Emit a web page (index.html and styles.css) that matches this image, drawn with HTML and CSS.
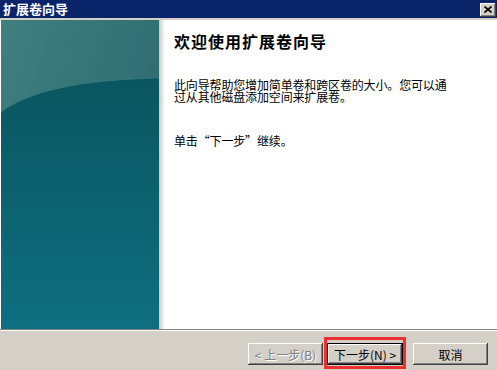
FILE: index.html
```html
<!DOCTYPE html>
<html lang="zh-CN">
<head>
  <meta charset="UTF-8">
  <title>扩展卷向导</title>
  <link rel="stylesheet" href="styles.css">
</head>
<body>
  <div class="wizard">
    <div class="titlebar">
      <span class="title">扩展卷向导</span>
      <span class="closebtn" title="关闭">
        <svg width="8" height="7" viewBox="0 0 8 7"><path d="M0.5 0.5 L7.5 6.5 M7.5 0.5 L0.5 6.5" stroke="#000" stroke-width="1.7"/></svg>
      </span>
    </div>
    <div class="page">
      <div class="banner">
        <svg width="158" height="309" viewBox="0 0 158 309">
          <defs>
            <linearGradient id="upper" x1="0" y1="0" x2="1" y2="0.6">
              <stop offset="0" stop-color="#3f7f7e"/>
              <stop offset="1" stop-color="#2c6a70"/>
            </linearGradient>
            <linearGradient id="lower" x1="0" y1="0" x2="0" y2="1">
              <stop offset="0" stop-color="#0a5660"/>
              <stop offset="0.5" stop-color="#0c6270"/>
              <stop offset="1" stop-color="#0e6f80"/>
            </linearGradient>
          </defs>
          <rect width="158" height="309" fill="url(#upper)"/>
          <path d="M0 92 C 30 70, 80 60, 158 58 L158 309 L0 309 Z" fill="url(#lower)"/>
          <path d="M0 92 C 30 70, 80 60, 158 58" fill="none" stroke="#3f8080" stroke-width="1" opacity="0.6"/>
        </svg>
      </div>
      <div class="shade"></div>
      <div class="content">
        <h1>欢迎使用扩展卷向导</h1>
        <p>此向导帮助您增加简单卷和跨区卷的大小。您可以通过从其他磁盘添加空间来扩展卷。</p>
        <p class="hint">单击“下一步”继续。</p>
      </div>
    </div>
    <div class="footer">
      <button class="btn" disabled>&lt; 上一步(B)</button>
      <span class="mark"><button class="btn default">下一步(N) &gt;</button></span>
      <button class="btn cancel">取消</button>
    </div>
  </div>
</body>
</html>
```

FILE: styles.css
```css
html, body{margin:0; padding:0; background:#d4d0c8;}
body{font-family:"Noto Sans CJK SC", "Liberation Sans", sans-serif; font-size:12px; color:#000;}
.wizard{width:497px; height:370px; background:#d4d0c8; overflow:hidden;}

.titlebar{height:18px; background:#0a246a; border-bottom:2px solid #d4d0c8; display:flex; align-items:center; justify-content:space-between; padding:0 1px 0 3px;}
.title{color:#fff; font-weight:bold; font-size:13px; line-height:18px;}
.closebtn{width:16px; height:14px; box-sizing:border-box; background:#d4d0c8; display:flex; align-items:center; justify-content:center; box-shadow:inset -1px -1px #404040, inset 1px 1px #fff, inset -2px -2px #808080; margin-top:1px;}

.page{height:309px; display:flex; background:#fff; border-bottom:1px solid #808080; box-shadow:0 1px 0 #fff; padding-left:1px;}
.banner{width:158px; height:309px; flex:none;}
.banner svg{display:block;}
.shade{width:6px; flex:none; background:linear-gradient(to right, #c8c8c8, #fff);}
.content{padding:11px 0 0 9px;}
.content h1{margin:0 0 28px; font-size:16px; font-weight:bold; letter-spacing:1px; line-height:20px;}
.content p{margin:0; width:280px; line-height:12px; letter-spacing:-0.15px;}
.content .hint{margin-top:32px;}

.footer{display:flex; justify-content:flex-end; align-items:flex-start; padding:13px 9px 0 0;}
.btn{width:75px; height:22px; box-sizing:border-box; border:none; background:#d4d0c8; font:12px "Noto Sans CJK SC", "Liberation Sans", sans-serif; color:#000; padding:0; box-shadow:inset -1px -1px #404040, inset 1px 1px #fff, inset -2px -2px #808080;}
.btn:disabled{color:#808080; text-shadow:1px 1px #fff;}
.btn.default{width:76px; border:1px solid #000; box-shadow:inset -1px -1px #404040, inset 1px 1px #fff, inset -2px -2px #808080;}
.mark{position:relative; display:block; margin-left:4px;}
.mark::after{content:""; position:absolute; left:-3px; right:-3px; top:-6px; bottom:-4px; border:3px solid #ec3030;}
.cancel{margin-left:10px;}
```
